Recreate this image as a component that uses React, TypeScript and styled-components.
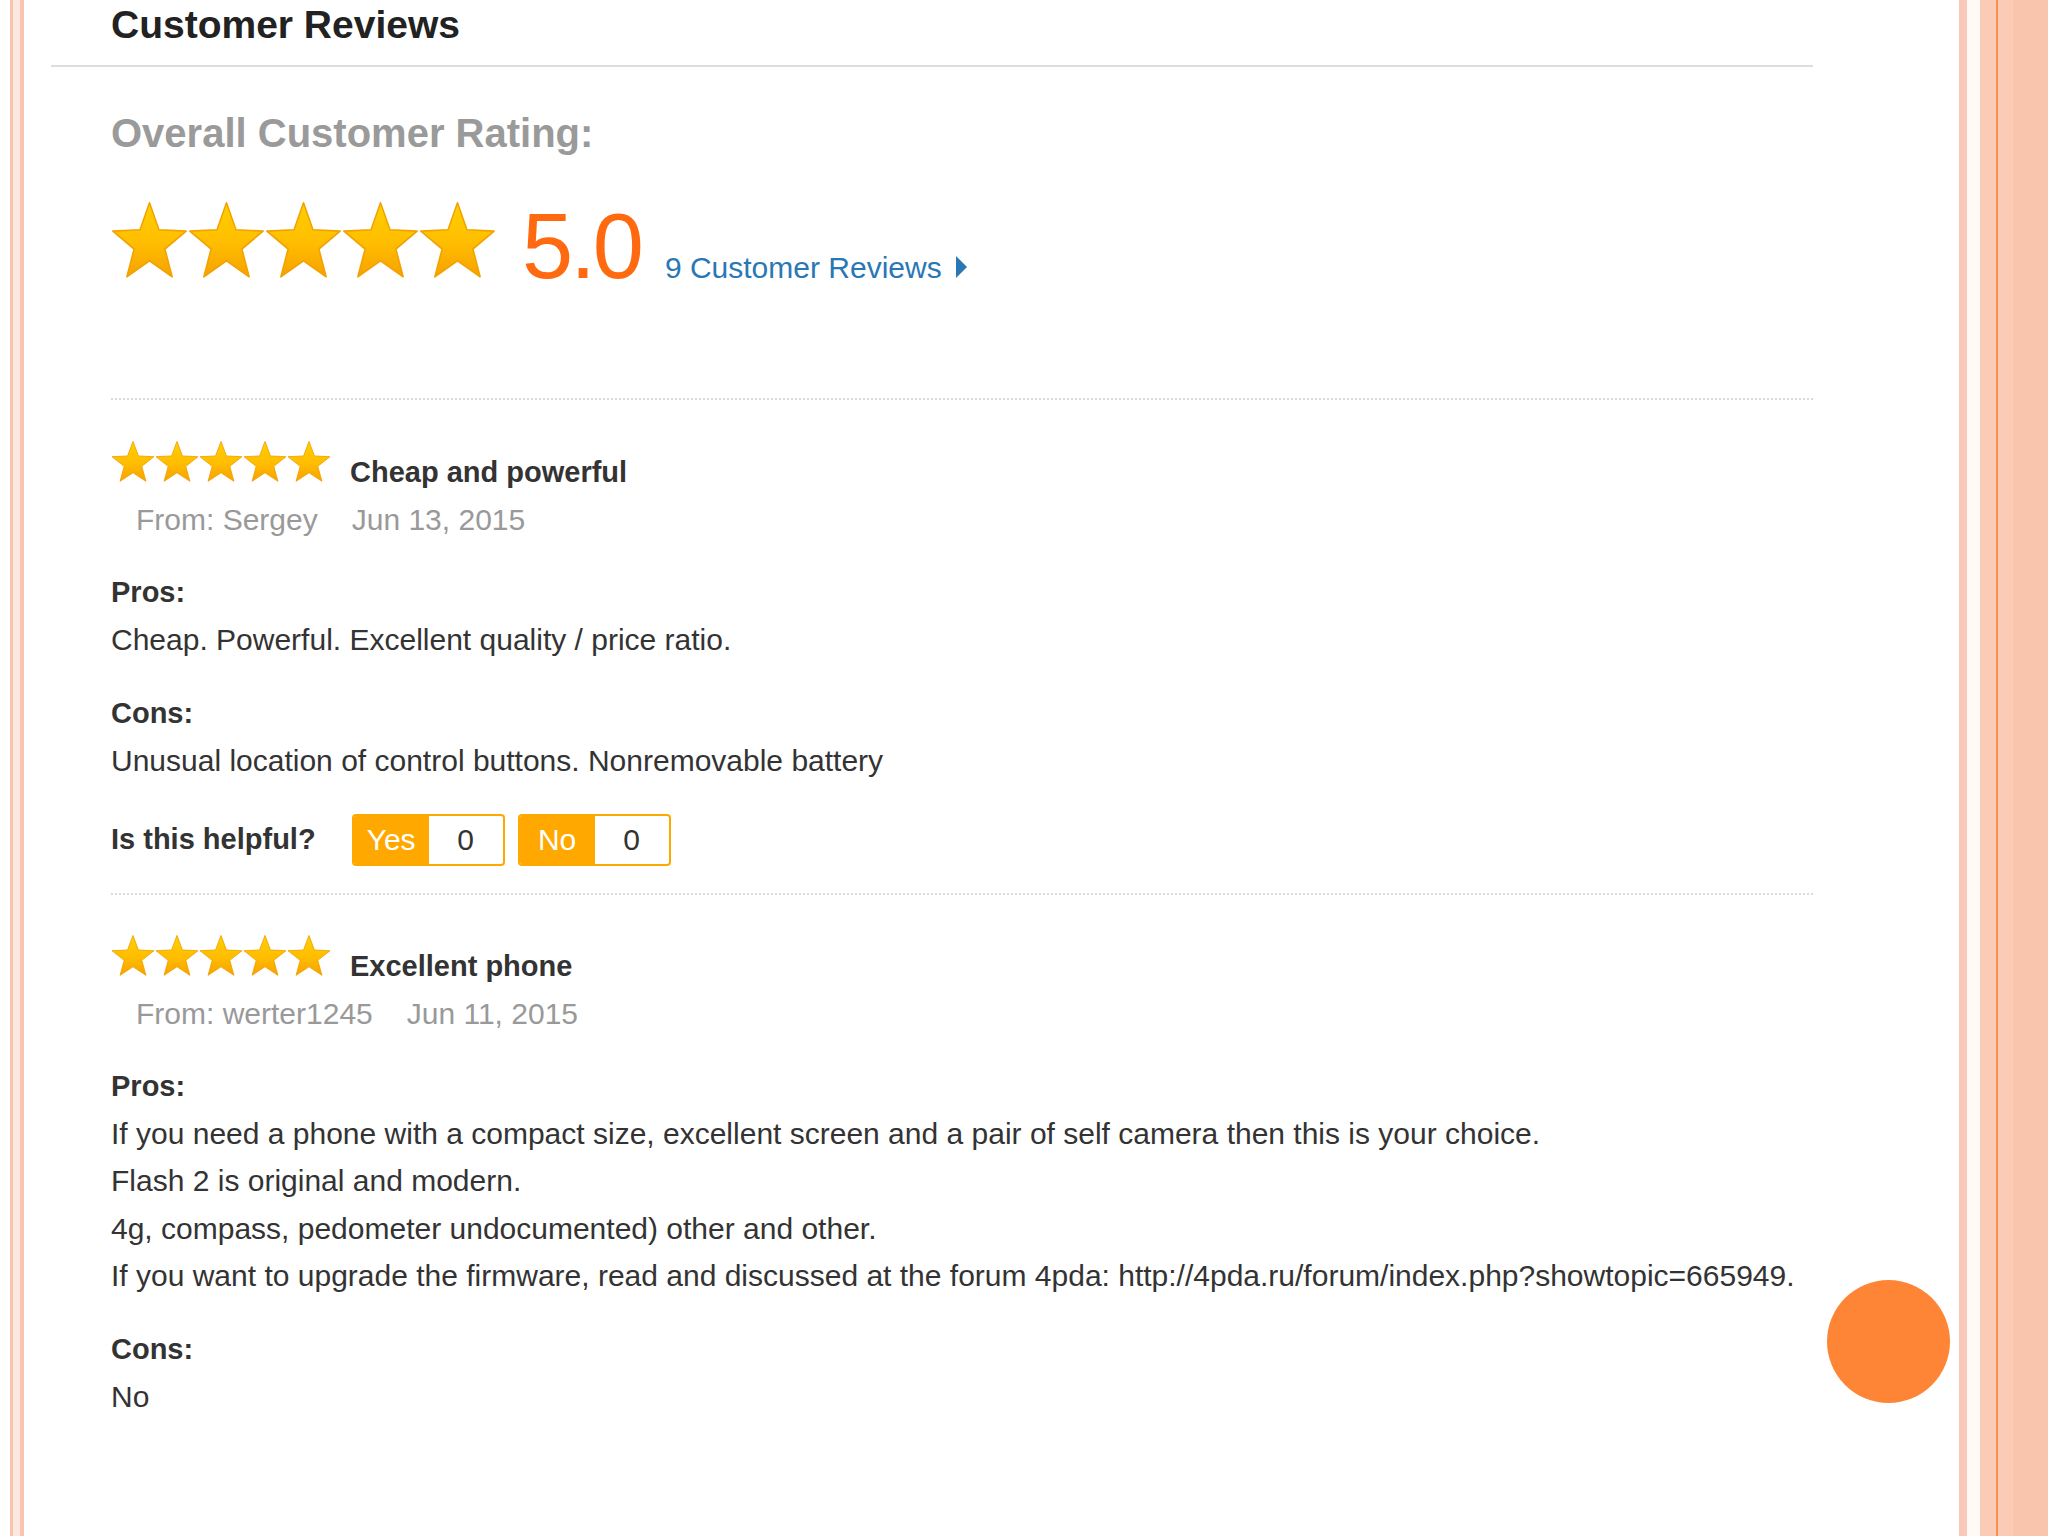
import React, { useId } from 'react'
import styled, { createGlobalStyle } from 'styled-components'

const GlobalStyle = createGlobalStyle`
  html, body {
    margin: 0;
    padding: 0;
    background: #fff;
  }
  body {
    font-family: "Liberation Sans", Arial, sans-serif;
    color: #333;
  }
`

const Frame = styled.div`
  position: relative;
  display: flex;
  min-height: 1536px;
  overflow: hidden;
`

const LeftEdge = styled.div`
  flex: 0 0 24px;
  background: linear-gradient(
    to right,
    #fff 0 10px,
    #f9c4b2 10px 13px,
    #fde8df 13px 20px,
    #f9c4b2 20px 24px
  );
`

const RightEdge = styled.div`
  flex: 0 0 89px;
  background: linear-gradient(
    to right,
    #fac8b9 0 8px,
    #fffaf6 8px 21px,
    #fbcbb6 21px 37px,
    #f7904f 37px 39px,
    #fbcbb6 39px 54px,
    #f9c5ad 54px 89px
  );
`

const Main = styled.main`
  flex: 1;
  min-width: 0;
  padding: 0 146px 0 27px;
`

const Title = styled.h2`
  margin: 0;
  padding: 3px 0 18px 60px;
  font-size: 39px;
  line-height: 44px;
  font-weight: 700;
  color: #222;
  border-bottom: 2px solid #ddd;
`

const Body = styled.div`
  padding-left: 60px;
`

const Summary = styled.section`
  padding: 42px 0 106px;
  border-bottom: 2px dotted #dadada;
`

const OverallLabel = styled.h3`
  margin: 0;
  font-size: 40px;
  line-height: 48px;
  font-weight: 700;
  color: #9a9a9a;
`

const RatingRow = styled.div`
  display: flex;
  align-items: baseline;
  margin-top: 43px;
`

const StarRow = styled.div`
  display: flex;
  flex: 0 0 auto;
`

const Score = styled.span`
  margin-left: 26px;
  font-size: 92px;
  line-height: 92px;
  letter-spacing: -3px;
  color: #ff6a10;
`

const ReviewsLink = styled.a`
  margin-left: 24px;
  font-size: 30px;
  line-height: 36px;
  color: #2a77b5;
  text-decoration: none;
  white-space: nowrap;
`

const LinkArrow = styled.span`
  display: inline-block;
  margin-left: 14px;
  width: 0;
  height: 0;
  border-left: 11px solid #2a77b5;
  border-top: 11px solid transparent;
  border-bottom: 11px solid transparent;
`

const Review = styled.article`
  padding: 41px 0 27px;

  & + & {
    border-top: 2px dotted #dadada;
    padding-top: 40px;
  }
`

const ReviewHeader = styled.div`
  display: flex;
  align-items: baseline;
  gap: 19px;
`

const ReviewTitle = styled.h4`
  margin: 0;
  font-size: 29px;
  line-height: 47px;
  font-weight: 700;
  color: #333;
`

const Meta = styled.div`
  padding-left: 25px;
  font-size: 30px;
  line-height: 47px;
  color: #999;
`

const MetaDate = styled.span`
  margin-left: 34px;
`

const FieldLabel = styled.div`
  margin-top: 26px;
  font-size: 29px;
  line-height: 47.4px;
  font-weight: 700;
  color: #333;
`

const FieldText = styled.div`
  font-size: 30px;
  line-height: 47.4px;
  color: #333;
  white-space: nowrap;
`

const HelpfulRow = styled.div`
  display: flex;
  align-items: center;
  margin-top: 29px;
`

const HelpfulLabel = styled.span`
  font-size: 29px;
  font-weight: 700;
  color: #333;
  margin-right: 36px;
`

const VoteButton = styled.button`
  display: flex;
  box-sizing: border-box;
  width: 153px;
  height: 52px;
  padding: 0;
  margin-right: 13px;
  border: 2px solid #ffa800;
  border-radius: 4px;
  overflow: hidden;
  background: #fff;
  font-family: inherit;
  font-size: 30px;
  cursor: pointer;
`

const VoteLabel = styled.span`
  display: flex;
  align-items: center;
  justify-content: center;
  width: 75px;
  background: #ffa800;
  color: #fff;
`

const VoteCount = styled.span`
  display: flex;
  flex: 1;
  align-items: center;
  justify-content: center;
  color: #333;
`

const Dot = styled.div`
  position: absolute;
  top: 1280px;
  right: 98px;
  width: 123px;
  height: 123px;
  border-radius: 50%;
  background: #fe8535;
`

const STAR_POINTS =
  '50,4 62.3,37 97.6,38.6 70,60.5 79.4,94.5 50,75 20.6,94.5 30,60.5 2.4,38.6 37.7,37'

const Star: React.FC<{ width: number; height: number }> = ({ width, height }) => {
  const id = useId()
  return (
    <svg width={width} height={height} viewBox="0 3 100 93" preserveAspectRatio="none">
      <defs>
        <linearGradient id={id} x1="0" y1="0" x2="0" y2="1">
          <stop offset="0" stopColor="#ffd000" />
          <stop offset="0.55" stopColor="#ffbd00" />
          <stop offset="1" stopColor="#f7a100" />
        </linearGradient>
      </defs>
      <polygon
        points={STAR_POINTS}
        fill={`url(#${id})`}
        stroke="#f2a200"
        strokeWidth="2"
        strokeLinejoin="round"
      />
    </svg>
  )
}

const Stars: React.FC<{ width: number; height: number }> = ({ width, height }) => (
  <StarRow>
    {[0, 1, 2, 3, 4].map(i => (
      <Star key={i} width={width} height={height} />
    ))}
  </StarRow>
)

interface ReviewData {
  title: string
  author: string
  date: string
  pros: string[]
  cons: string[]
  helpful?: boolean
}

const reviews: ReviewData[] = [
  {
    title: 'Cheap and powerful',
    author: 'Sergey',
    date: 'Jun 13, 2015',
    pros: ['Cheap. Powerful. Excellent quality / price ratio.'],
    cons: ['Unusual location of control buttons. Nonremovable battery'],
    helpful: true,
  },
  {
    title: 'Excellent phone',
    author: 'werter1245',
    date: 'Jun 11, 2015',
    pros: [
      'If you need a phone with a compact size, excellent screen and a pair of self camera then this is your choice.',
      'Flash 2 is original and modern.',
      '4g, compass, pedometer undocumented) other and other.',
      'If you want to upgrade the firmware, read and discussed at the forum 4pda: http://4pda.ru/forum/index.php?showtopic=665949.',
    ],
    cons: ['No'],
  },
]

const ReviewItem: React.FC<{ review: ReviewData }> = ({ review }) => (
  <Review>
    <ReviewHeader>
      <Stars width={44} height={41} />
      <ReviewTitle>{review.title}</ReviewTitle>
    </ReviewHeader>
    <Meta>
      From: {review.author}
      <MetaDate>{review.date}</MetaDate>
    </Meta>
    <FieldLabel>Pros:</FieldLabel>
    {review.pros.map((line, i) => (
      <FieldText key={i}>{line}</FieldText>
    ))}
    <FieldLabel>Cons:</FieldLabel>
    {review.cons.map((line, i) => (
      <FieldText key={i}>{line}</FieldText>
    ))}
    {review.helpful && (
      <HelpfulRow>
        <HelpfulLabel>Is this helpful?</HelpfulLabel>
        <VoteButton>
          <VoteLabel>Yes</VoteLabel>
          <VoteCount>0</VoteCount>
        </VoteButton>
        <VoteButton>
          <VoteLabel>No</VoteLabel>
          <VoteCount>0</VoteCount>
        </VoteButton>
      </HelpfulRow>
    )}
  </Review>
)

export default function App() {
  return (
    <>
      <GlobalStyle />
      <Frame>
        <LeftEdge />
        <Main>
          <Title>Customer Reviews</Title>
          <Body>
            <Summary>
              <OverallLabel>Overall Customer Rating:</OverallLabel>
              <RatingRow>
                <Stars width={77} height={76} />
                <Score>5.0</Score>
                <ReviewsLink href="#">
                  9 Customer Reviews
                  <LinkArrow />
                </ReviewsLink>
              </RatingRow>
            </Summary>
            {reviews.map((r, i) => (
              <ReviewItem key={i} review={r} />
            ))}
          </Body>
        </Main>
        <RightEdge />
        <Dot />
      </Frame>
    </>
  )
}
